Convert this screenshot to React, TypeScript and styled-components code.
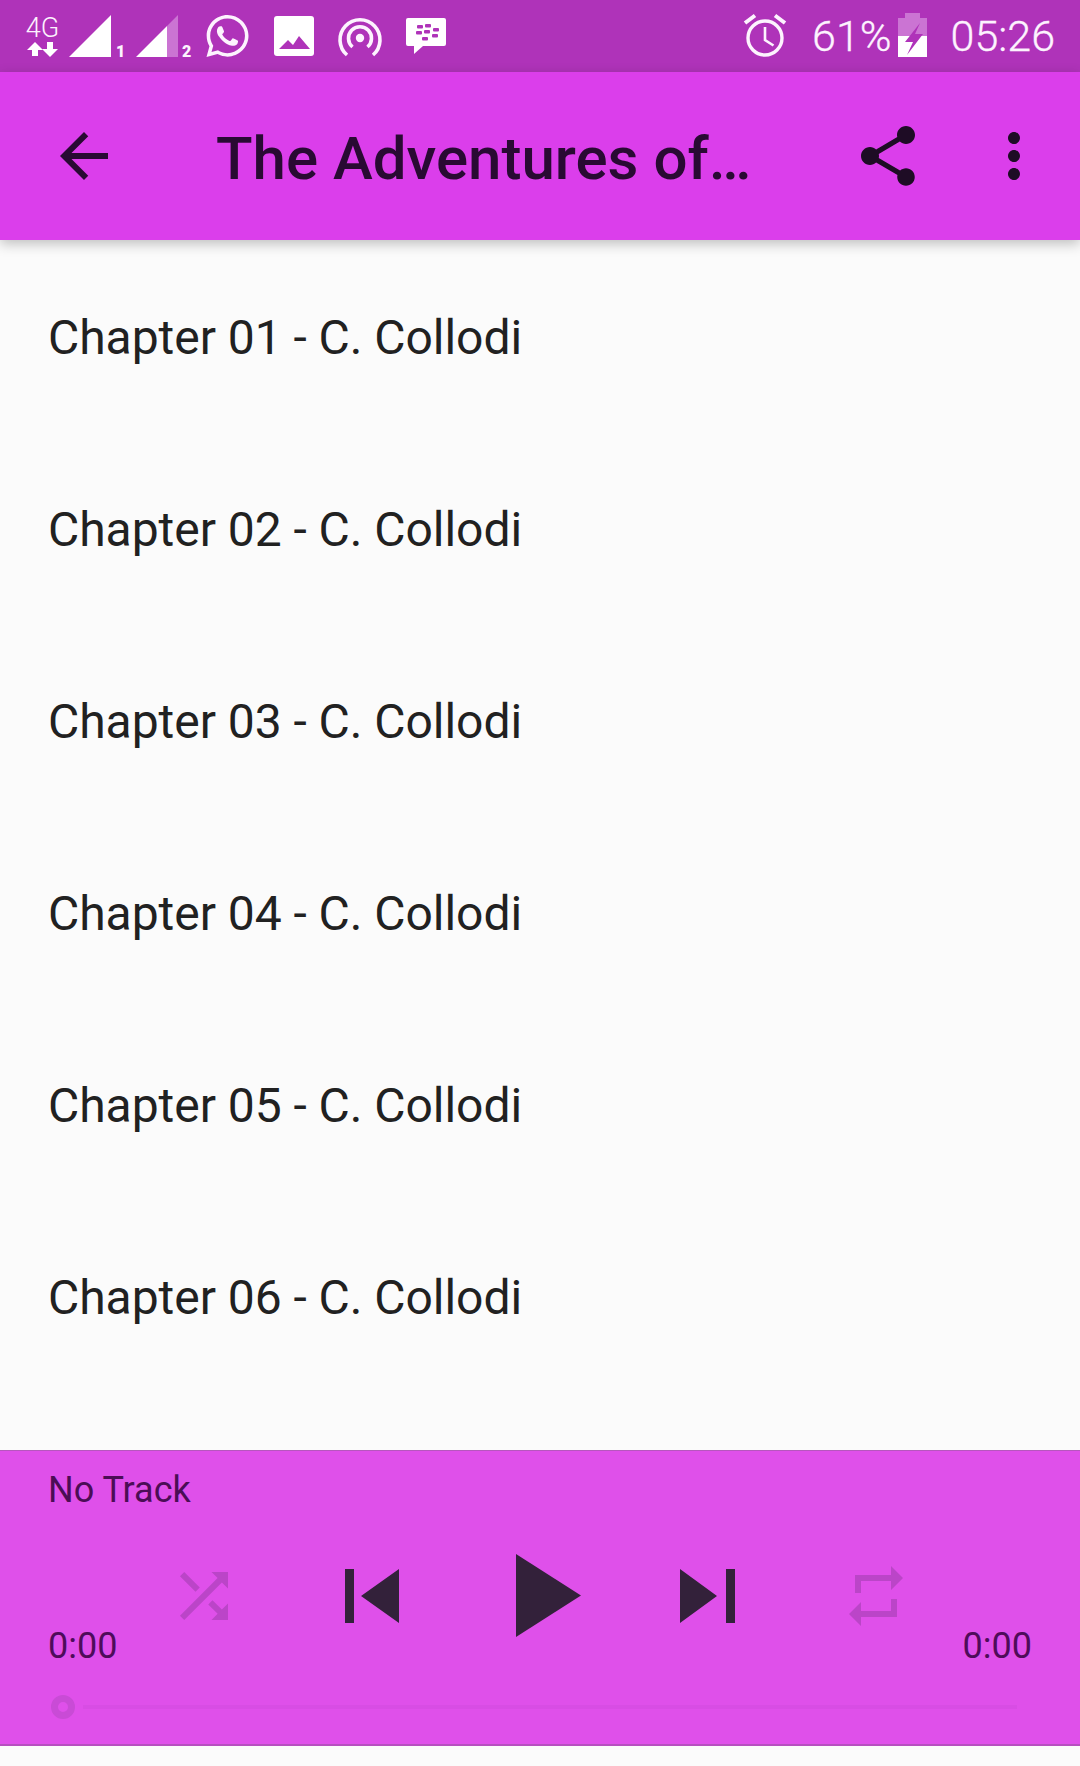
import React from "react";
import styled, { createGlobalStyle } from "styled-components";
import { FaWhatsapp } from "react-icons/fa";

const Global = createGlobalStyle`
  html, body { margin: 0; padding: 0; background: #fbfbfb; }
  * { box-sizing: border-box; }
`;

const Page = styled.div`
  width: 1080px;
  height: 1766px;
  display: flex;
  flex-direction: column;
  background: #fbfbfb;
  font-family: Roboto, "Liberation Sans", sans-serif;
  overflow: hidden;
`;

const StatusBar = styled.div`
  height: 72px;
  flex: none;
  display: flex;
  align-items: center;
  justify-content: space-between;
  padding: 0 25px 0 20px;
  background: #af33b9;
  color: #fdf3fe;
`;

const StatusGroup = styled.div`
  display: flex;
  align-items: center;
  height: 72px;
`;

const Slot = styled.div<{ $w: number }>`
  width: ${(p) => p.$w}px;
  height: 72px;
  flex: none;
  display: flex;
  align-items: center;
  justify-content: center;
`;

const CellSvg = styled.svg`
  display: block;
  flex: none;
`;

const WhatsApp = styled(FaWhatsapp)`
  width: 47px;
  height: 48px;
  color: #fdf3fe;
`;

const StatusText = styled.span<{ $before: number; $after?: number }>`
  font-size: 43px;
  font-weight: 300;
  line-height: 72px;
  margin-left: ${(p) => p.$before}px;
  margin-right: ${(p) => p.$after ?? 0}px;
  -webkit-text-stroke: 0.3px #fdf3fe;
`;

const Toolbar = styled.header`
  height: 168px;
  flex: none;
  display: flex;
  align-items: center;
  padding: 0 30px 0 48px;
  background: #db3eeb;
  color: #290a33;
  box-shadow: 0 4px 12px rgba(0, 0, 0, 0.24);
  position: relative;
`;

const ToolIcon = styled.svg`
  width: 72px;
  height: 72px;
  flex: none;
  fill: currentColor;
`;

const Title = styled.h1`
  flex: 1;
  margin: 0 0 0 96px;
  padding-top: 6px;
  font-size: 60px;
  font-weight: 500;
  line-height: 72px;
  white-space: nowrap;
`;

const ShareSlot = styled.div`
  margin-right: 54px;
  height: 72px;
  color: #1e0c25;
`;

const MoreSlot = styled.div`
  height: 72px;
  color: #1e0c25;
`;

const ChapterList = styled.ul`
  flex: 1;
  margin: 0;
  padding: 1px 0 0;
  list-style: none;
`;

const ChapterRow = styled.li`
  height: 192px;
  padding: 0 48px;
  display: flex;
  align-items: center;
  font-size: 48px;
  letter-spacing: -0.04px;
  color: #212121;
`;

const Player = styled.section`
  height: 296px;
  flex: none;
  margin-bottom: 20px;
  display: flex;
  flex-direction: column;
  background: #df50ea;
  border-top: 1px solid #b657bd;
  border-bottom: 2px solid #b64fbf;
`;

const TrackName = styled.div`
  height: 70px;
  padding: 18px 48px 0;
  font-size: 36px;
  line-height: 42px;
  color: #4b0d55;
`;

const ControlsRow = styled.div`
  height: 150px;
  display: grid;
  grid-template-columns: 168px 744px 168px;
`;

const Time = styled.span<{ $side: "left" | "right" }>`
  align-self: end;
  justify-self: ${(p) => (p.$side === "left" ? "start" : "end")};
  padding: ${(p) => (p.$side === "left" ? "0 0 4px 48px" : "0 48px 4px 0")};
  font-size: 36px;
  line-height: 42px;
  color: #4e0c5a;
`;

const Controls = styled.div`
  display: flex;
  align-items: flex-start;
  justify-content: center;
  gap: 96px;
  padding-top: 39px;
`;

const ControlIcon = styled.svg<{ $muted?: boolean }>`
  width: 72px;
  height: 72px;
  flex: none;
  fill: ${(p) => (p.$muted ? "#bb45c8" : "#33213a")};
`;

const PlayIcon = styled.svg`
  width: 72px;
  height: 108px;
  flex: none;
  margin-top: -18px;
  overflow: visible;
  fill: #33213a;
`;

const Seek = styled.div`
  flex: 1;
  display: flex;
  align-items: center;
  padding: 0 63px 1px 51px;
`;

const Thumb = styled.div`
  width: 24px;
  height: 24px;
  flex: none;
  border-radius: 50%;
  border: 7px solid #c94bd6;
  margin-right: 8px;
`;

const Rail = styled.div`
  flex: 1;
  height: 4px;
  background: #d84de4;
`;

const chapters = ["01", "02", "03", "04", "05", "06"];

export default function App() {
  return (
    <Page>
      <Global />
      <StatusBar>
        <StatusGroup>
          <Slot $w={44}>
            <CellSvg width="44" height="72" viewBox="0 0 44 72">
              <text x="22.5" y="37" textAnchor="middle" fontFamily="Roboto, sans-serif" fontSize="27" fontWeight="300" fill="#fdf3fe">4G</text>
              <path d="M15 42l8 8h-5v6h-6v-6H7z" fill="#fff" />
              <path d="M27 42h6v7h5l-8 8-8-8h5z" fill="#fff" />
            </CellSvg>
          </Slot>
          <Slot $w={66}>
            <CellSvg width="66" height="72" viewBox="0 0 66 72">
              <path d="M5 57L47 15v42z" fill="#fff" />
              <text x="52" y="57" fontFamily="Roboto, sans-serif" fontSize="16" fontWeight="900" fill="#fdf3fe">1</text>
            </CellSvg>
          </Slot>
          <Slot $w={67}>
            <CellSvg width="67" height="72" viewBox="0 0 67 72">
              <path d="M6 57l31-31v31z" fill="#fff" />
              <path d="M37 26L48 15v42H37z" fill="#cb74d3" />
              <text x="52" y="57" fontFamily="Roboto, sans-serif" fontSize="16" fontWeight="900" fill="#fdf3fe">2</text>
            </CellSvg>
          </Slot>
          <Slot $w={61}>
            <WhatsApp />
          </Slot>
          <Slot $w={72}>
            <CellSvg width="72" height="72" viewBox="0 0 72 72">
              <rect x="16" y="16" width="40" height="40" rx="3" fill="#fff" />
              <path d="M21 49l9-9 5 5 6-9 11 13z" fill="#af33b9" />
            </CellSvg>
          </Slot>
          <Slot $w={60}>
            <CellSvg width="60" height="72" viewBox="0 0 60 72">
              <g fill="none" stroke="#fdf3fe" strokeWidth="3.6">
                <path d="M17 55a20 20 0 1 1 26 0" />
                <path d="M22.5 47a11.5 11.5 0 1 1 15 0" />
              </g>
              <circle cx="30" cy="38" r="4.2" fill="#fdf3fe" />
            </CellSvg>
          </Slot>
          <Slot $w={70}>
            <CellSvg width="70" height="72" viewBox="0 0 70 72">
              <path d="M16 20a2 2 0 0 1 2-2h36a2 2 0 0 1 2 2v24a2 2 0 0 1-2 2H33l-9 8v-8h-6a2 2 0 0 1-2-2z" fill="#fff" />
              <g fill="#af33b9">
                <rect x="27" y="25" width="6" height="3.5" rx="1" />
                <rect x="35" y="24" width="6" height="3.5" rx="1" />
                <rect x="43" y="28" width="6" height="3.5" rx="1" />
                <rect x="26" y="31" width="6" height="3.5" rx="1" />
                <rect x="34" y="30" width="6" height="3.5" rx="1" />
                <rect x="42" y="34" width="6" height="3.5" rx="1" />
                <rect x="32" y="37" width="6" height="3.5" rx="1" />
              </g>
            </CellSvg>
          </Slot>
        </StatusGroup>
        <StatusGroup>
          <Slot $w={44}>
            <CellSvg width="44" height="72" viewBox="0 0 44 72">
              <g fill="none" stroke="#fdf3fe">
                <circle cx="22" cy="38" r="17" strokeWidth="3.4" />
                <path d="M22 27v13l8.5 5.5" strokeWidth="2.6" />
                <path d="M2 23l10-7.5M42 23l-10-7.5" strokeWidth="4" />
              </g>
            </CellSvg>
          </Slot>
          <StatusText $before={25} $after={6}>61%</StatusText>
          <Slot $w={29}>
            <CellSvg width="29" height="72" viewBox="0 0 29 72">
              <path d="M7 13h15v5h7v18H0V18h7z" fill="#cb74d3" />
              <path d="M0 36h29v21H0z" fill="#fff" />
              <path d="M22 23L7 42h8l-6 13 16-21h-8l5-11z" fill="#af33b9" />
            </CellSvg>
          </Slot>
          <StatusText $before={24}>05:26</StatusText>
        </StatusGroup>
      </StatusBar>

      <Toolbar>
        <ToolIcon viewBox="0 0 24 24">
          <path d="M20 11H7.83l5.59-5.59L12 4l-8 8 8 8 1.41-1.41L7.83 13H20v-2z" />
        </ToolIcon>
        <Title>The Adventures of…</Title>
        <ShareSlot>
          <ToolIcon viewBox="0 0 24 24">
            <path d="M18 16.08c-.76 0-1.44.3-1.96.77L8.91 12.7c.05-.23.09-.46.09-.7s-.04-.47-.09-.7l7.05-4.11c.54.5 1.25.81 2.04.81 1.66 0 3-1.34 3-3s-1.34-3-3-3-3 1.34-3 3c0 .24.04.47.09.7L8.04 9.81C7.5 9.31 6.79 9 6 9c-1.66 0-3 1.34-3 3s1.34 3 3 3c.79 0 1.5-.31 2.04-.81l7.12 4.16c-.05.21-.08.43-.08.65 0 1.61 1.31 2.92 2.92 2.92 1.61 0 2.92-1.31 2.92-2.92s-1.31-2.92-2.92-2.92z" />
          </ToolIcon>
        </ShareSlot>
        <MoreSlot>
          <ToolIcon viewBox="0 0 24 24">
            <path d="M12 8c1.1 0 2-.9 2-2s-.9-2-2-2-2 .9-2 2 .9 2 2 2zm0 2c-1.1 0-2 .9-2 2s.9 2 2 2 2-.9 2-2-.9-2-2-2zm0 6c-1.1 0-2 .9-2 2s.9 2 2 2 2-.9 2-2-.9-2-2-2z" />
          </ToolIcon>
        </MoreSlot>
      </Toolbar>

      <ChapterList>
        {chapters.map((n) => (
          <ChapterRow key={n}>Chapter {n} - C. Collodi</ChapterRow>
        ))}
      </ChapterList>

      <Player>
        <TrackName>No Track</TrackName>
        <ControlsRow>
          <Time $side="left">0:00</Time>
          <Controls>
            <ControlIcon $muted viewBox="0 0 24 24">
              <path d="M10.59 9.17L5.41 4 4 5.41l5.17 5.17 1.42-1.41zM14.5 4l2.04 2.04L4 18.59 5.41 20 17.96 7.46 20 9.5V4h-5.5zm.33 9.41l-1.41 1.41 3.13 3.13L14.5 20H20v-5.5l-2.04 2.04-3.13-3.13z" />
            </ControlIcon>
            <ControlIcon viewBox="0 0 72 72">
              <path d="M9 9h9v54H9zM25 36L63 9v54z" />
            </ControlIcon>
            <PlayIcon viewBox="0 0 72 108">
              <path d="M12 12l65 41.5L12 95z" />
            </PlayIcon>
            <ControlIcon viewBox="0 0 72 72">
              <path d="M8 9l37 27L8 63zM54 9h9v54h-9z" />
            </ControlIcon>
            <ControlIcon $muted viewBox="0 0 24 24">
              <path d="M7 7h10v3l4-4-4-4v3H5v6h2V7zm10 10H7v-3l-4 4 4 4v-3h12v-6h-2v4z" />
            </ControlIcon>
          </Controls>
          <Time $side="right">0:00</Time>
        </ControlsRow>
        <Seek>
          <Thumb />
          <Rail />
        </Seek>
      </Player>
    </Page>
  );
}
